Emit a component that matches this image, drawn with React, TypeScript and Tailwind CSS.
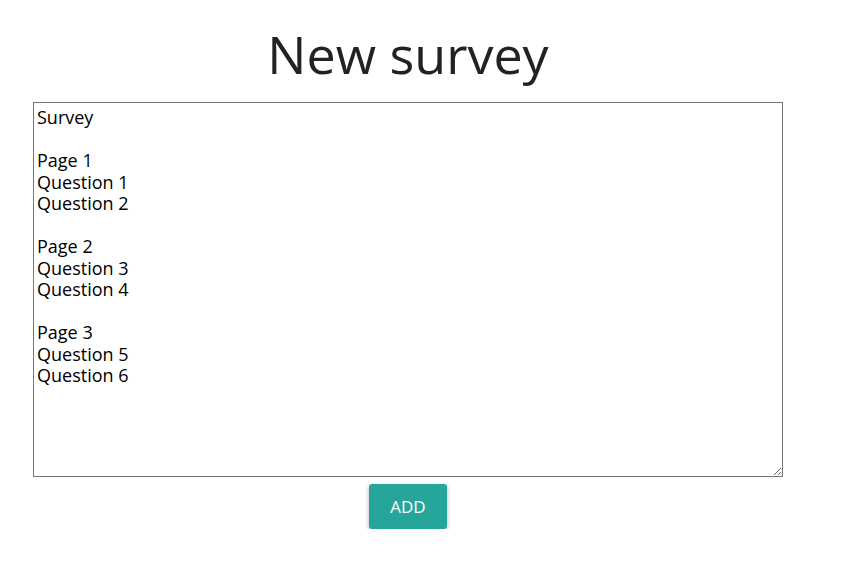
const text = `Survey

Page 1
Question 1
Question 2

Page 2
Question 3
Question 4

Page 3
Question 5
Question 6`;

export default function App() {
	return (
		<div
			className="w-[816px] flex flex-col items-center bg-white"
			style={{ fontFamily: '"Open Sans", "Noto Sans", sans-serif' }}
		>
			<h1 className="mt-[16px] mb-[10px] text-[52px] leading-[76px] text-[#222222] font-normal">
				New survey
			</h1>
			<textarea
				defaultValue={text}
				className="w-[750px] h-[375px] border border-[#767676] px-[3px] pt-[4px] pb-[3px] text-[18px] leading-[21.5px] text-black outline-none"
				style={{ fontFamily: '"Open Sans", "Noto Sans", sans-serif' }}
			/>
			<button className="mt-[7px] w-[78px] h-[45px] rounded-[3px] bg-[#26a69a] text-white text-[17px] shadow-[0_2px_5px_rgba(0,0,0,0.3)]">
				ADD
			</button>
		</div>
	);
}
